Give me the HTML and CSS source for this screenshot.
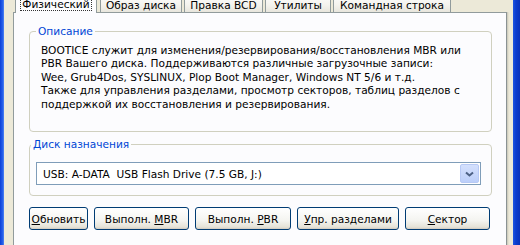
FILE: index.html
```html
<!DOCTYPE html>
<html lang="ru">
<head>
	<meta charset="UTF-8">
	<title>BOOTICE</title>
	<link rel="stylesheet" href="styles.css">
</head>
<body>
	<div id="window">
		<div class="edge-left"></div>
		<div id="dialog">
			<ul id="tabs">
				<li class="tab on t1"><span>Физический</span></li>
				<li class="tab t2">Образ диска</li>
				<li class="tab t3">Правка BCD</li>
				<li class="tab t4">Утилиты</li>
				<li class="tab t5">Командная строка</li>
			</ul>
			<div id="page">
				<fieldset class="group about">
					<legend>Описание</legend>
					<p class="desc">BOOTICE служит для изменения/резервирования/восстановления MBR или
PBR Вашего диска. Поддерживаются различные загрузочные записи:
Wee, Grub4Dos, SYSLINUX, Plop Boot Manager, Windows NT 5/6 и т.д.
Также для управления разделами, просмотр секторов, таблиц разделов с
поддержкой их восстановления и резервирования.</p>
				</fieldset>
				<fieldset class="group disk">
					<legend>Диск назначения</legend>
					<div class="combo">
						<span class="value">USB: A-DATA  USB Flash Drive (7.5 GB, J:)</span>
						<span class="drop"><svg width="9" height="6" viewBox="0 0 9 6"><path d="M1 1.5 L4.5 4.5 L8 1.5" fill="none" stroke="#4d6185" stroke-width="2"/></svg></span>
					</div>
				</fieldset>
				<div class="buttons">
					<button class="b1"><span><u>О</u>бновить</span></button>
					<button class="b2"><span>Выполн. <u>M</u>BR</span></button>
					<button class="b3"><span>Выполн. <u>P</u>BR</span></button>
					<button class="b4"><span><u>У</u>пр. разделами</span></button>
					<button class="b5"><span><u>С</u>ектор</span></button>
				</div>
			</div>
		</div>
		<div class="edge-right"></div>
	</div>
</body>
</html>
```

FILE: styles.css
```css
body,ul,li,p{padding: 0;margin: 0;}
body{background-color: #ece9d8;font-family: Tahoma, "DejaVu Sans", sans-serif;font-size: 10.6px;color: #000;}
#window{width: 520px;height: 245px;display: flex;overflow: hidden;}
.edge-left{width: 4px;background: linear-gradient(to right, #0a3fd8, #2a64ec 75%, #5a8cf2);}
.edge-right{width: 7px;background: linear-gradient(to right, #1d55e0, #0a3ccf 40%, #0831b8);}
#dialog{flex: 1;padding: 0 6px 0 9px;}

#tabs{display: flex;margin: -8px 0 0 2px;height: 20px;align-items: flex-end;list-style-type: none;}
.tab{height: 19px;box-sizing: border-box;padding-top: 5px;line-height: 13px;text-align: center;white-space: nowrap;overflow: hidden;border: 1px solid #919b9c;border-bottom: none;border-radius: 3px 3px 0 0;background: linear-gradient(#fefefe, #f4f3ee 60%, #e8e6dd);margin-left: 2px;}
.tab.on{height: 21px;margin-left: 0;margin-bottom: -1px;background: #fcfcfe;position: relative;z-index: 1;}
.tab.on span{outline: 1px dotted #333;outline-offset: 0;padding: 0 1px;}
.t1{width: 82px;}
.t2{width: 82px;margin-left: 3px;}
.t3{width: 79px;}
.t4{width: 66px;}
.t5{width: 118px;}

#page{height: 260px;background: #fcfcfe;border: 1px solid #919b9c;border-right-color: #8a9293;box-shadow: 1px 0 0 #d0cebf, 2px 0 0 #e3e0d0;padding: 0 14px 0 15px;}

.group{border: 1px solid #d0d0bf;border-radius: 4px;margin: 0;min-width: 0;}
.group legend{color: #0046d5;line-height: 13px;padding: 0 2px;margin-left: -5px;}
.about{margin-top: 12px;padding: 6px 8px 20px 11px;}
.desc{white-space: pre-line;line-height: 13.4px;}
.disk{margin-top: 6px;padding: 11px 10px 10px 6px;}

.combo{display: flex;align-items: center;height: 23px;box-sizing: border-box;border: 1px solid #7f9db9;background: #fff;padding: 1px;}
.combo .value{flex: 1;white-space: pre;padding-left: 5px;}
.drop{width: 19px;height: 19px;display: flex;align-items: center;justify-content: center;border: 1px solid #b7c9f5;border-radius: 2px;box-sizing: border-box;background: linear-gradient(#d4e0fd, #bccffa);}

.buttons{display: flex;gap: 6px;margin-top: 11px;}
.buttons button{height: 23px;padding: 0;font: inherit;color: #000;display: flex;align-items: center;justify-content: center;overflow: hidden;white-space: pre;border: 1px solid #003c74;border-radius: 3px;background: linear-gradient(#ffffff, #f4f4f0 60%, #e6e3d8 90%, #d6d0c5);box-shadow: inset 0 -1px 0 #d6d0c5;}
.buttons button span{flex: none;}
.b1{width: 59px;}
.b2{width: 95px;}
.b3{width: 96px;}
.b4{width: 102px;}
.b5{width: 85px;}
```
